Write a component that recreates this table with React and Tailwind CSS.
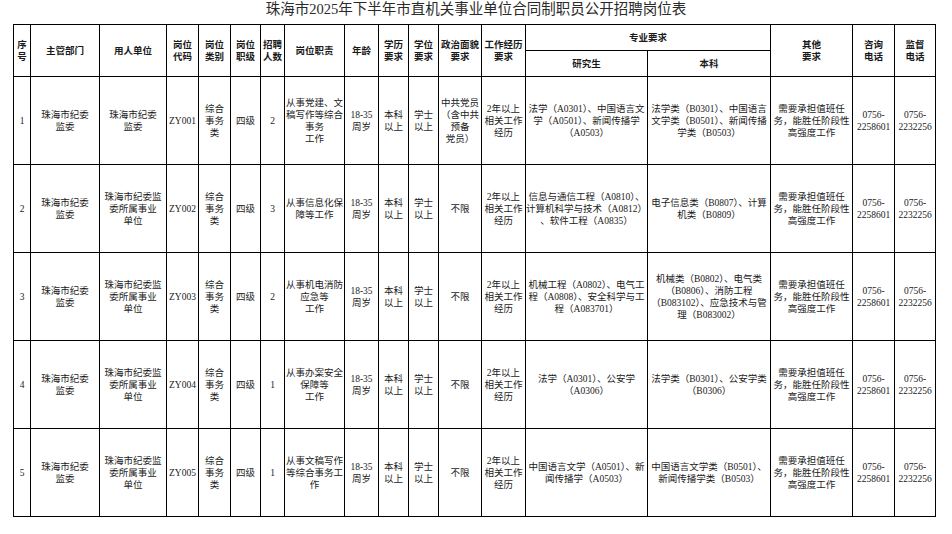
import React from "react";

const widths = [17, 69, 67, 32, 32, 30, 24, 60, 34, 30, 30, 43, 44, 122, 123, 82, 42, 41];

const common = ["珠海市纪委/监委", "18-35/周岁", "本科/以上", "学士/以上"];
const other = "需要承担值班任/务，能胜任阶段性/高强度工作";

const rows = [
  {
    no: "1",
    unit: "珠海市纪委/监委",
    code: "ZY001",
    num: "2",
    duty: "从事党建、文/稿写作等综合/事务/工作",
    party: "中共党员/（含中共/预备/党员）",
    grad: "法学（A0301）、中国语言文/学（A0501）、新闻传播学/（A0503）",
    bach: "法学类（B0301）、中国语言/文学类（B0501）、新闻传播/学类（B0503）",
  },
  {
    no: "2",
    unit: "珠海市纪委监/委所属事业/单位",
    code: "ZY002",
    num: "3",
    duty: "从事信息化保/障等工作",
    party: "不限",
    grad: "信息与通信工程（A0810）、/计算机科学与技术（A0812）/、软件工程（A0835）",
    bach: "电子信息类（B0807）、计算/机类（B0809）",
  },
  {
    no: "3",
    unit: "珠海市纪委监/委所属事业/单位",
    code: "ZY003",
    num: "2",
    duty: "从事机电消防/应急等/工作",
    party: "不限",
    grad: "机械工程（A0802）、电气工/程（A0808）、安全科学与工/程（A083701）",
    bach: "机械类（B0802）、电气类/（B0806）、消防工程/（B083102）、应急技术与管/理（B083002）",
  },
  {
    no: "4",
    unit: "珠海市纪委监/委所属事业/单位",
    code: "ZY004",
    num: "1",
    duty: "从事办案安全/保障等/工作",
    party: "不限",
    grad: "法学（A0301）、公安学/（A0306）",
    bach: "法学类（B0301）、公安学类/（B0306）",
  },
  {
    no: "5",
    unit: "珠海市纪委监/委所属事业/单位",
    code: "ZY005",
    num: "1",
    duty: "从事文稿写作/等综合事务工/作",
    party: "不限",
    grad: "中国语言文学（A0501）、新/闻传播学（A0503）",
    bach: "中国语言文学类（B0501）、/新闻传播学类（B0503）",
  },
];

const Lines = ({ text }) =>
  text.split("/").map((t, i, arr) => (
    <React.Fragment key={i}>
      {t}
      {i < arr.length - 1 && <br />}
    </React.Fragment>
  ));

const Th = ({ text, ...rest }) => (
  <th
    {...rest}
    className="border border-black px-0 font-bold text-center align-middle whitespace-nowrap"
  >
    <Lines text={text} />
  </th>
);

const Td = ({ text }) => (
  <td className="border border-black px-0 text-center align-middle whitespace-nowrap">
    <Lines text={text} />
  </td>
);

export default function App() {
  return (
    <div
      className="w-[952px] h-[534px] bg-white text-[#1a1a1a] overflow-hidden"
      style={{ fontFamily: '"Liberation Serif", "Noto Sans CJK SC", serif' }}
    >
      <div className="h-6 flex items-center justify-center text-[14.5px] text-[#2a2a2a] pb-1">
        珠海市2025年下半年市直机关事业单位合同制职员公开招聘岗位表
      </div>
      <table className="ml-[13px] w-[922px] table-fixed border-collapse text-[9.5px] leading-[12px]">
        <colgroup>
          {widths.map((w, i) => (
            <col key={i} style={{ width: w }} />
          ))}
        </colgroup>
        <thead>
          <tr className="h-[26px]">
            <Th text="序/号" rowSpan={2} />
            <Th text="主管部门" rowSpan={2} />
            <Th text="用人单位" rowSpan={2} />
            <Th text="岗位/代码" rowSpan={2} />
            <Th text="岗位/类别" rowSpan={2} />
            <Th text="岗位/职级" rowSpan={2} />
            <Th text="招聘/人数" rowSpan={2} />
            <Th text="岗位职责" rowSpan={2} />
            <Th text="年龄" rowSpan={2} />
            <Th text="学历/要求" rowSpan={2} />
            <Th text="学位/要求" rowSpan={2} />
            <Th text="政治面貌/要求" rowSpan={2} />
            <Th text="工作经历/要求" rowSpan={2} />
            <Th text="专业要求" colSpan={2} />
            <Th text="其他/要求" rowSpan={2} />
            <Th text="咨询/电话" rowSpan={2} />
            <Th text="监督/电话" rowSpan={2} />
          </tr>
          <tr className="h-[26px]">
            <Th text="研究生" />
            <Th text="本科" />
          </tr>
        </thead>
        <tbody>
          {rows.map((r) => (
            <tr key={r.no} className="h-[88px]">
              <Td text={r.no} />
              <Td text={common[0]} />
              <Td text={r.unit} />
              <Td text={r.code} />
              <Td text="综合/事务/类" />
              <Td text="四级" />
              <Td text={r.num} />
              <Td text={r.duty} />
              <Td text={common[1]} />
              <Td text={common[2]} />
              <Td text={common[3]} />
              <Td text={r.party} />
              <Td text="2年以上/相关工作/经历" />
              <Td text={r.grad} />
              <Td text={r.bach} />
              <Td text={other} />
              <Td text="0756-/2258601" />
              <Td text="0756-/2232256" />
            </tr>
          ))}
        </tbody>
      </table>
    </div>
  );
}
